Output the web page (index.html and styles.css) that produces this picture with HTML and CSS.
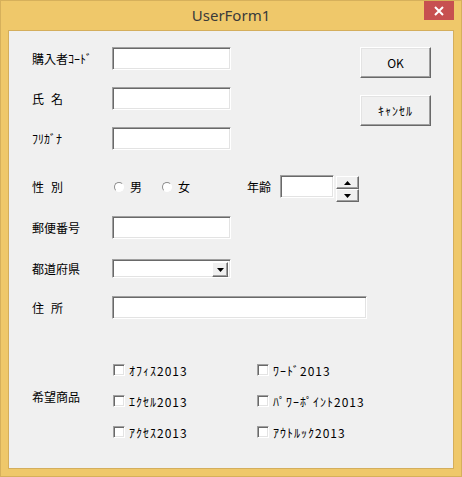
FILE: index.html
```html
<html>
	<head>
		<meta charset=utf-8>
		<link rel="stylesheet" href="styles.css">
		<title>UserForm1</title>
	</head>
	<body>
		<div class="window">
			<div class="titlebar">
				<div class="title">UserForm1</div>
				<div class="close">
					<svg width="10" height="10" viewBox="0 0 10 10"><path d="M1 1L9 9M9 1L1 9" stroke="#fff" stroke-width="2"/></svg>
				</div>
			</div>
			<div class="client">
				<div class="top">
					<div class="fields">
						<div class="row">
							<span class="lbl">購入者ｺｰﾄﾞ</span>
							<span class="field txt"></span>
						</div>
						<div class="row r2">
							<span class="lbl sp">氏名</span>
							<span class="field txt"></span>
						</div>
						<div class="row r2">
							<span class="lbl">ﾌﾘｶﾞﾅ</span>
							<span class="field txt"></span>
						</div>
					</div>
					<div class="btns">
						<div class="btn">OK</div>
						<div class="btn hk">ｷｬﾝｾﾙ</div>
					</div>
				</div>
				<div class="row gender">
					<span class="lbl sp">性別</span>
					<label class="radio"><span class="circ"></span>男</label>
					<label class="radio"><span class="circ"></span>女</label>
					<span class="age">年齢</span>
					<span class="field agebox"></span>
					<span class="spin">
						<span class="sbtn"><svg width="7" height="4" viewBox="0 0 7 4"><path d="M3.5 0L7 4H0z"/></svg></span>
						<span class="sbtn"><svg width="7" height="4" viewBox="0 0 7 4"><path d="M0 0H7L3.5 4z"/></svg></span>
					</span>
				</div>
				<div class="row r5">
					<span class="lbl">郵便番号</span>
					<span class="field txt"></span>
				</div>
				<div class="row r6">
					<span class="lbl">都道府県</span>
					<span class="field combo">
						<span class="drop"><svg width="7" height="4" viewBox="0 0 7 4"><path d="M0 0H7L3.5 4z"/></svg></span>
					</span>
				</div>
				<div class="row r7">
					<span class="lbl sp">住所</span>
					<span class="field addr"></span>
				</div>
				<div class="row r8">
					<span class="lbl wish">希望商品</span>
					<div class="checks">
						<label class="chk"><span class="field box"></span>ｵﾌｨｽ2013</label>
						<label class="chk"><span class="field box"></span>ﾜｰﾄﾞ2013</label>
						<label class="chk"><span class="field box"></span>ｴｸｾﾙ2013</label>
						<label class="chk"><span class="field box"></span>ﾊﾟﾜｰﾎﾟｲﾝﾄ2013</label>
						<label class="chk"><span class="field box"></span>ｱｸｾｽ2013</label>
						<label class="chk"><span class="field box"></span>ｱｳﾄﾙｯｸ2013</label>
					</div>
				</div>
			</div>
		</div>
	</body>
</html>
```

FILE: styles.css
```css
body{
	margin:0;
	font-family:"Noto Sans CJK JP", sans-serif;
	font-size:12px;
	color:#000;
}
.window{
	width:462px;
	height:477px;
	box-sizing:border-box;
	border:1px solid #d6b05b;
	background:#efc86a;
	display:flex;
	flex-direction:column;
}
.titlebar{
	height:29px;
	display:grid;
	grid-template-columns:1fr auto 1fr;
	align-items:start;
}
.title{
	grid-column:2;
	font-family:"Noto Sans", sans-serif;
	font-size:15px;
	line-height:29px;
	color:#3a3a3a;
}
.close{
	grid-column:3;
	justify-self:end;
	width:30px;
	height:19px;
	margin-right:7px;
	background:#c75050;
	display:flex;
	align-items:center;
	justify-content:center;
}
.client{
	flex:1;
	margin:0 7px 7px 7px;
	border:1px solid #d4ae5c;
	background:#f0f0f0;
	padding:16px 0 0 23px;
}
.top{
	display:flex;
	justify-content:space-between;
	padding-right:22px;
}
.btns{
	display:flex;
	flex-direction:column;
	gap:17px;
}
.btn{
	width:71px;
	height:31px;
	box-sizing:border-box;
	background:#f0f0f0;
	border:1px solid;
	border-color:#fff #696969 #696969 #fff;
	box-shadow:inset -1px -1px 0 #a0a0a0, inset 1px 1px 0 #e3e3e3;
	display:flex;
	align-items:center;
	justify-content:center;
}
.hk{ letter-spacing:1px; }
.row{
	display:flex;
	align-items:center;
}
.r2{ margin-top:17px; }
.lbl{
	width:80px;
	flex-shrink:0;
}
.sp{ letter-spacing:7px; }
.field{
	display:block;
	background:#fff;
	box-sizing:border-box;
	border:1px solid;
	border-color:#a0a0a0 #fff #fff #a0a0a0;
	box-shadow:inset 1px 1px 0 #696969, inset -1px -1px 0 #e3e3e3;
}
.txt{
	width:119px;
	height:23px;
}
.gender{
	margin-top:25px;
	align-items:flex-start;
	height:29px;
	line-height:23px;
}
.radio{
	display:flex;
	align-items:center;
	gap:6px;
	height:23px;
	margin-left:2px;
}
.radio + .radio{ margin-left:20px; }
.circ{
	width:10px;
	height:10px;
	box-sizing:border-box;
	border-radius:50%;
	border:1px solid;
	border-color:#8c8c8c #fff #fff #8c8c8c;
	background:#fff;
}
.age{ margin-left:57px; }
.agebox{
	width:54px;
	height:23px;
	margin-left:9px;
}
.spin{
	display:flex;
	flex-direction:column;
	margin:1px 0 0 2px;
}
.sbtn, .drop{
	width:23px;
	height:13px;
	box-sizing:border-box;
	background:#f0f0f0;
	border:1px solid;
	border-color:#fff #696969 #696969 #fff;
	box-shadow:inset -1px -1px 0 #a0a0a0;
	display:flex;
	align-items:center;
	justify-content:center;
}
.r5{ margin-top:12px; }
.r6{ margin-top:20px; }
.combo{
	width:119px;
	height:19px;
	display:flex;
	justify-content:flex-end;
	padding:2px;
}
.drop{
	width:16px;
	height:15px;
}
.r7{ margin-top:18px; }
.addr{
	width:255px;
	height:23px;
}
.r8{
	margin-top:43px;
	align-items:flex-start;
}
.wish{ margin-top:26px; }
.checks{
	display:grid;
	grid-template-columns:144px 144px;
	row-gap:15px;
	margin-left:1px;
	letter-spacing:1px;
}
.chk{
	display:flex;
	align-items:center;
	gap:4px;
	height:16px;
}
.box{
	width:12px;
	height:12px;
}
```
